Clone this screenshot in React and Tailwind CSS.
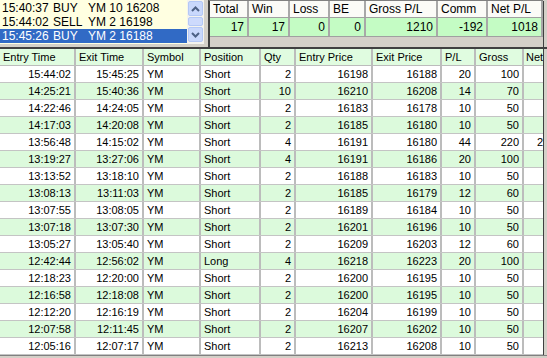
import React from 'react'

const orders = [
  { t: '15:40:37', side: 'BUY', desc: 'YM 10 16208' },
  { t: '15:44:02', side: 'SELL', desc: 'YM 2 16198' },
  { t: '15:45:26', side: 'BUY', desc: 'YM 2 16188', selected: true },
]

const summaryCols = [
  { label: 'Total', value: '17', w: 'w-[39px]' },
  { label: 'Win', value: '17', w: 'w-[41px]' },
  { label: 'Loss', value: '0', w: 'w-[40px]' },
  { label: 'BE', value: '0', w: 'w-[36px]' },
  { label: 'Gross P/L', value: '1210', w: 'w-[72px]' },
  { label: 'Comm', value: '-192', w: 'w-[50px]' },
  { label: 'Net P/L', value: '1018', w: 'w-[55px]' },
]

const cols = [
  { label: 'Entry Time', w: 'w-[76px]', right: true },
  { label: 'Exit Time', w: 'w-[68px]', right: true },
  { label: 'Symbol', w: 'w-[57px]' },
  { label: 'Position', w: 'w-[60px]' },
  { label: 'Qty', w: 'w-[35px]', right: true },
  { label: 'Entry Price', w: 'w-[77px]', right: true },
  { label: 'Exit Price', w: 'w-[69px]', right: true },
  { label: 'P/L', w: 'w-[34px]', right: true },
  { label: 'Gross', w: 'w-[48px]', right: true },
]

// Net column is cut off by the right edge; only the first digit of a 3-digit value shows
const trades = [
  ['15:44:02', '15:45:25', 'YM', 'Short', '2', '16198', '16188', '20', '100', ''],
  ['14:25:21', '15:40:36', 'YM', 'Short', '10', '16210', '16208', '14', '70', ''],
  ['14:22:46', '14:24:05', 'YM', 'Short', '2', '16183', '16178', '10', '50', ''],
  ['14:17:03', '14:20:08', 'YM', 'Short', '2', '16185', '16180', '10', '50', ''],
  ['13:56:48', '14:15:02', 'YM', 'Short', '4', '16191', '16180', '44', '220', '2'],
  ['13:19:27', '13:27:06', 'YM', 'Short', '4', '16191', '16186', '20', '100', ''],
  ['13:13:52', '13:18:10', 'YM', 'Short', '2', '16188', '16183', '10', '50', ''],
  ['13:08:13', '13:11:03', 'YM', 'Short', '2', '16185', '16179', '12', '60', ''],
  ['13:07:55', '13:08:05', 'YM', 'Short', '2', '16189', '16184', '10', '50', ''],
  ['13:07:18', '13:07:30', 'YM', 'Short', '2', '16201', '16196', '10', '50', ''],
  ['13:05:27', '13:05:40', 'YM', 'Short', '2', '16209', '16203', '12', '60', ''],
  ['12:42:44', '12:56:02', 'YM', 'Long', '4', '16218', '16223', '20', '100', ''],
  ['12:18:23', '12:20:00', 'YM', 'Short', '2', '16200', '16195', '10', '50', ''],
  ['12:16:58', '12:18:08', 'YM', 'Short', '2', '16200', '16195', '10', '50', ''],
  ['12:12:20', '12:16:19', 'YM', 'Short', '2', '16204', '16199', '10', '50', ''],
  ['12:07:58', '12:11:45', 'YM', 'Short', '2', '16207', '16202', '10', '50', ''],
  ['12:05:16', '12:07:17', 'YM', 'Short', '2', '16213', '16208', '10', '50', ''],
]

function Chevron({ up }) {
  return (
    <svg width="9" height="6" viewBox="0 0 9 6">
      <path
        d={up ? 'M1 5 L4.5 1.5 L8 5' : 'M1 1 L4.5 4.5 L8 1'}
        fill="none"
        stroke="#4d6185"
        strokeWidth="2"
      />
    </svg>
  )
}

export default function App() {
  return (
    <div className="w-[547px] h-[358px] overflow-hidden bg-[#d4d0c8] flex flex-col text-[11px] leading-none text-black font-['Liberation_Sans',Arial,sans-serif]">
      {/* top: order list + summary */}
      <div className="flex h-[47px]">
        <div className="w-[204px] h-[44px] flex bg-[#ffffe1]">
          <div className="flex-1 pt-px text-[12px]">
            {orders.map((o) => (
              <div
                key={o.t}
                className={`flex items-center h-[14px] pl-[2px] ${o.selected ? 'bg-[#316ac5] text-white' : ''}`}
              >
                <span className="w-[51px]">{o.t}</span>
                <span className="w-[35px]">{o.side}</span>
                <span>{o.desc}</span>
              </div>
            ))}
          </div>
          {/* scrollbar */}
          <div className="w-[17px] flex flex-col gap-px p-px bg-[#f4f3ee]">
            <div className="h-[15px] rounded-[2px] border border-[#b4c8f6] bg-[#c9d8fc] flex items-center justify-center">
              <Chevron up />
            </div>
            <div className="h-[9px] rounded-[2px] border border-[#b4c8f6] bg-[#cddafc]" />
            <div className="h-[15px] rounded-[2px] border border-[#b4c8f6] bg-[#c9d8fc] flex items-center justify-center">
              <Chevron />
            </div>
          </div>
        </div>
        <div className="w-[4px]" />
        {/* summary */}
        <div className="flex-1 flex">
          <div className="w-[335px] border-l-2 border-t border-l-[#404040] border-t-[#808080] flex flex-col">
            <div className="flex h-[17px] bg-[#fbfbf7] border-b border-[#a0a0a0]">
              {summaryCols.map((c) => (
                <div key={c.label} className={`${c.w} border-r-2 border-[#a8a8a8] pl-[3px] text-[12px] flex items-center`}>
                  {c.label}
                </div>
              ))}
            </div>
            <div className="flex h-[19px] bg-[#c4fcc4] border-b border-[#a0a0a0]">
              {summaryCols.map((c) => (
                <div key={c.label} className={`${c.w} border-r-2 border-[#a8a8a8] pr-[3px] text-[12px] flex items-center justify-end`}>
                  {c.value}
                </div>
              ))}
            </div>
          </div>
          <div className="w-[4px] border-l border-[#404040] mt-[1px]" />
        </div>
      </div>

      {/* trades grid */}
      <div className="flex h-[308px] border-t-2 border-[#404040]">
        <div className="w-[543px] overflow-hidden bg-white flex flex-col">
          <div className="flex h-[17px] shrink-0 bg-[#e0fce0] border-b border-[#bcbcbc]">
            {cols.map((c) => (
              <div key={c.label} className={`${c.w} shrink-0 border-r-2 border-[#bcbcbc] pl-[3px] flex items-center whitespace-nowrap`}>
                {c.label}
              </div>
            ))}
            <div className="flex-1 pl-[2px] flex items-center">Net</div>
          </div>
          {trades.map((row, i) => (
            <div
              key={row[0]}
              className={`flex h-[17px] shrink-0 border-b border-[#c4c4c4] ${i % 2 === 1 ? 'bg-[#dcfadc]' : 'bg-white'}`}
            >
              {cols.map((c, j) => (
                <div
                  key={c.label}
                  className={`${c.w} shrink-0 border-r-2 border-[#bcbcbc] flex items-center whitespace-nowrap ${c.right ? 'justify-end pr-[3px]' : 'pl-[3px]'}`}
                >
                  {row[j]}
                </div>
              ))}
              <div className="flex-1 pl-[13px] flex items-center">{row[9]}</div>
            </div>
          ))}
        </div>
        <div className="w-[4px] border-l border-[#404040]" />
      </div>
      <div className="flex-1 border-t border-[#808080]" />
    </div>
  )
}
